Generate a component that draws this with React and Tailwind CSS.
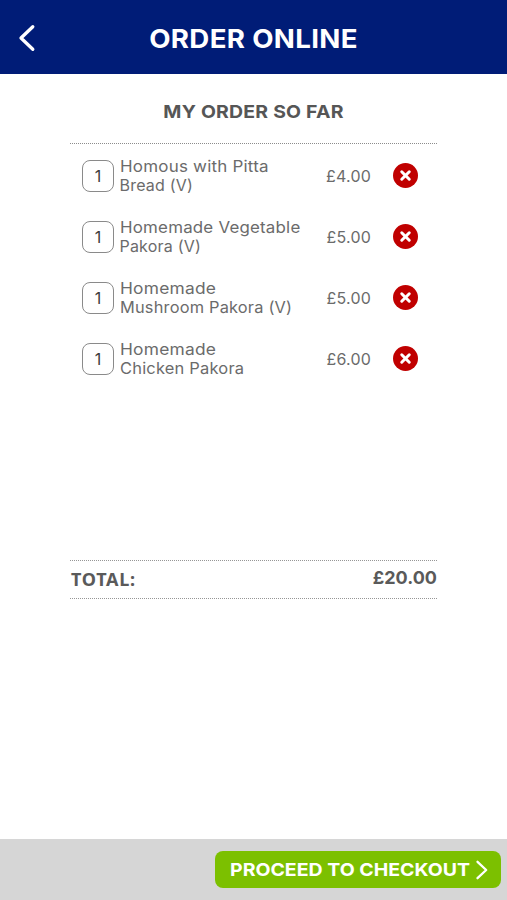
import { X } from 'lucide-react'

// each line is [text, width class]
const items = [
  {
    id: 1,
    qty: 1,
    lines: [
      ['Homous with Pitta', 'scale-x-[1.06]'],
      ['Bread (V)', 'scale-x-[1]'],
    ],
    price: '£4.00',
  },
  {
    id: 2,
    qty: 1,
    lines: [
      ['Homemade Vegetable', 'scale-x-[1.055]'],
      ['Pakora (V)', 'scale-x-[1]'],
    ],
    price: '£5.00',
  },
  {
    id: 3,
    qty: 1,
    lines: [
      ['Homemade', 'scale-x-[1.085]'],
      ['Mushroom Pakora (V)', 'scale-x-[1.022]'],
    ],
    price: '£5.00',
  },
  {
    id: 4,
    qty: 1,
    lines: [
      ['Homemade', 'scale-x-[1.085]'],
      ['Chicken Pakora', 'scale-x-[1.028]'],
    ],
    price: '£6.00',
  },
]

const OrderItem = ({ item }) => (
  <li className="flex items-center h-[61px] pl-[12px] pr-[19px]">
    <span className="flex items-center justify-center w-[32px] h-[32px] shrink-0 rounded-[8px] border-[1.5px] border-[#8a8a8a] pt-[1px] text-[16px] text-[#3c3c3c]">
      {item.qty}
    </span>
    <span className="ml-[5.5px] pt-[1px] flex-1 whitespace-nowrap text-[16px] leading-[19px] tracking-[0.2px]">
      {item.lines.map(([text, width]) => (
        <span key={text} className={`block origin-left ${width}`}>{text}</span>
      ))}
    </span>
    <span className="text-[16px] tracking-[0.2px] mr-[22px]">{item.price}</span>
    <button
      className="flex items-center justify-center w-[25px] h-[25px] rounded-full bg-[#c00000] text-white"
      title="Remove"
    >
      <X size={15} strokeWidth={4.8} />
    </button>
  </li>
)

const App = () => {
  return (
    <div className="flex flex-col h-screen bg-white font-['Inter',sans-serif] text-[#6b6b6b]">
      {/* Header */}
      <header className="grid grid-cols-[60px_1fr_60px] items-center h-[74px] shrink-0 bg-[#001c77] text-white">
        <button className="pl-[18px] pt-[2px]" title="Back">
          <svg width="18" height="28" viewBox="0 0 18 28" fill="none" stroke="currentColor" strokeWidth="3.3" strokeLinecap="round" strokeLinejoin="round">
            <path d="M14.8 2.7 3 14 14.8 25.3" />
          </svg>
        </button>
        <h1 className="pt-[4px] text-center text-[25.5px] font-bold tracking-[0.3px] whitespace-nowrap scale-x-[1.085]">ORDER ONLINE</h1>
      </header>

      {/* Order */}
      <main className="flex-1 mx-[70px]">
        <div className="h-[70px] pt-[24px] border-b border-dotted border-[#8c8c8c]">
          <h2 className="text-center text-[18px] leading-[28px] font-bold text-[#565656] tracking-[0.2px] scale-x-[1.08]">
            MY ORDER SO FAR
          </h2>
        </div>
        <ul className="h-[416px] pt-[1px]">
          {items.map((item) => (
            <OrderItem key={item.id} item={item} />
          ))}
        </ul>
        <div className="flex items-center justify-between h-[39px] border-y border-dotted border-[#969696] text-[18px] font-bold text-[#5a5a5a]">
          <span className="pl-[1px] font-['Noto_Sans',sans-serif] tracking-[0.75px]">TOTAL:</span>
          <span className="pb-[4px]">£20.00</span>
        </div>
      </main>

      {/* Checkout */}
      <footer className="flex items-center justify-end h-[61px] shrink-0 pr-[6px] bg-[#d6d6d6]">
        <button className="flex items-center w-[286px] h-[37px] pl-[15px] rounded-[8px] bg-[#7cc000] text-white text-[18px] font-bold whitespace-nowrap">
          <span className="w-[245px] text-left origin-left scale-x-[1.083]">PROCEED TO CHECKOUT</span>
          <svg width="14" height="22" viewBox="0 0 14 22" fill="none" stroke="currentColor" strokeWidth="2.3" strokeLinecap="round" strokeLinejoin="round">
            <path d="M2.5 2.8 11.2 11 2.5 19.2" />
          </svg>
        </button>
      </footer>
    </div>
  )
}

export default App
